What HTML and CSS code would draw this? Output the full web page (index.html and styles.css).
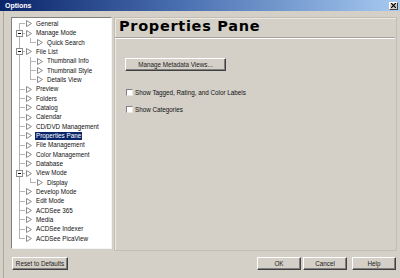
FILE: index.html
```html
<!DOCTYPE html>
<html lang="en">
<head>
    <meta charset="UTF-8">
    <title>Options</title>
    <link rel="stylesheet" href="styles.css">
</head>
<body>
    <svg class="defs" width="0" height="0">
        <symbol id="tri" viewBox="0 0 6 7">
            <path d="M0.5 0.5 L5.5 3.5 L0.5 6.5 Z" fill="#fff" stroke="#8a8a8a"/>
        </symbol>
    </svg>

    <div class="titlebar">
        <span class="title">Options</span>
        <span class="close">
            <svg width="5" height="5" viewBox="0 0 5 5"><path d="M0 0 L5 5 M5 0 L0 5" stroke="#000" stroke-width="1.2"/></svg>
        </span>
    </div>

    <div class="dialog">
        <div class="content">
            <!-- Category tree -->
            <div class="tree">
                <div class="row"><span class="cell tee first"></span><svg class="tri"><use href="#tri"/></svg><span class="label">General</span></div>
                <div class="row"><span class="cell tee"><span class="expander"></span></span><svg class="tri"><use href="#tri"/></svg><span class="label">Manage Mode</span></div>
                <div class="row"><span class="cell pipe"></span><span class="cell tee last"></span><svg class="tri"><use href="#tri"/></svg><span class="label">Quick Search</span></div>
                <div class="row"><span class="cell tee"><span class="expander"></span></span><svg class="tri"><use href="#tri"/></svg><span class="label">File List</span></div>
                <div class="row"><span class="cell pipe"></span><span class="cell tee"></span><svg class="tri"><use href="#tri"/></svg><span class="label">Thumbnail Info</span></div>
                <div class="row"><span class="cell pipe"></span><span class="cell tee"></span><svg class="tri"><use href="#tri"/></svg><span class="label">Thumbnail Style</span></div>
                <div class="row"><span class="cell pipe"></span><span class="cell tee last"></span><svg class="tri"><use href="#tri"/></svg><span class="label">Details View</span></div>
                <div class="row"><span class="cell tee"></span><svg class="tri"><use href="#tri"/></svg><span class="label">Preview</span></div>
                <div class="row"><span class="cell tee"></span><svg class="tri"><use href="#tri"/></svg><span class="label">Folders</span></div>
                <div class="row"><span class="cell tee"></span><svg class="tri"><use href="#tri"/></svg><span class="label">Catalog</span></div>
                <div class="row"><span class="cell tee"></span><svg class="tri"><use href="#tri"/></svg><span class="label">Calendar</span></div>
                <div class="row"><span class="cell tee"></span><svg class="tri"><use href="#tri"/></svg><span class="label">CD/DVD Management</span></div>
                <div class="row"><span class="cell tee"></span><svg class="tri"><use href="#tri"/></svg><span class="label selected">Properties Pane</span></div>
                <div class="row"><span class="cell tee"></span><svg class="tri"><use href="#tri"/></svg><span class="label">File Management</span></div>
                <div class="row"><span class="cell tee"></span><svg class="tri"><use href="#tri"/></svg><span class="label">Color Management</span></div>
                <div class="row"><span class="cell tee"></span><svg class="tri"><use href="#tri"/></svg><span class="label">Database</span></div>
                <div class="row"><span class="cell tee"><span class="expander"></span></span><svg class="tri"><use href="#tri"/></svg><span class="label">View Mode</span></div>
                <div class="row"><span class="cell pipe"></span><span class="cell tee last"></span><svg class="tri"><use href="#tri"/></svg><span class="label">Display</span></div>
                <div class="row"><span class="cell tee"></span><svg class="tri"><use href="#tri"/></svg><span class="label">Develop Mode</span></div>
                <div class="row"><span class="cell tee"></span><svg class="tri"><use href="#tri"/></svg><span class="label">Edit Mode</span></div>
                <div class="row"><span class="cell tee"></span><svg class="tri"><use href="#tri"/></svg><span class="label">ACDSee 365</span></div>
                <div class="row"><span class="cell tee"></span><svg class="tri"><use href="#tri"/></svg><span class="label">Media</span></div>
                <div class="row"><span class="cell tee"></span><svg class="tri"><use href="#tri"/></svg><span class="label">ACDSee Indexer</span></div>
                <div class="row"><span class="cell tee last"></span><svg class="tri"><use href="#tri"/></svg><span class="label">ACDSee PicaView</span></div>
            </div>

            <!-- Settings page -->
            <div class="page">
                <h1>Properties Pane</h1>
                <div class="rule"></div>
                <button class="btn btn-wide">Manage Metadata Views...</button>
                <label class="check"><span class="box"></span>Show Tagged, Rating, and Color Labels</label>
                <label class="check"><span class="box"></span>Show Categories</label>
            </div>
        </div>

        <div class="footer">
            <button class="btn btn-reset">Reset to Defaults</button>
            <div class="actions">
                <button class="btn btn-ok">OK</button>
                <button class="btn btn-cancel">Cancel</button>
                <button class="btn btn-help">Help</button>
            </div>
        </div>
    </div>
</body>
</html>
```

FILE: styles.css
```css
/* Classic Windows dialog look */
body {
    margin: 0;
    background-color: #d4d0c8;
    font-family: "Liberation Sans", Arial, sans-serif;
    font-size: 6.3px;
    color: #111;
    overflow: hidden;
}

.defs {
    position: absolute;
}

.titlebar {
    display: flex;
    justify-content: space-between;
    align-items: center;
    height: 11px;
    padding: 0 2px 0 5px;
    background: linear-gradient(to right, #0a246a, #4a6fb0 45%, #a6caf0);
}

.title {
    color: #fff;
    font-weight: bold;
    font-size: 7px;
}

.close {
    display: flex;
    align-items: center;
    justify-content: center;
    box-sizing: border-box;
    width: 9px;
    height: 8px;
    background-color: #d4d0c8;
    border: 1px solid;
    border-color: #fff #404040 #404040 #fff;
}

.dialog {
    margin-left: 3px;
    border-left: 1px solid #aca899;
    height: 267px;
}

.content {
    display: flex;
    gap: 2px;
    padding: 6px 3px 0 7px;
}

/* Tree */
.tree {
    box-sizing: border-box;
    width: 101px;
    height: 232px;
    padding: 1.3px 0 0 2px;
    background-color: #fff;
    border: 1px solid;
    border-color: #808080 #f4f4f4 #f4f4f4 #808080;
}

.row {
    display: flex;
    align-items: center;
    height: 9.33px;
}

.cell {
    display: flex;
    align-items: center;
    flex: none;
    width: 11px;
    height: 100%;
}

.pipe {
    background: linear-gradient(#b4b4b4, #b4b4b4) 5px 0 / 1px 100% no-repeat;
}

.tee {
    background:
        linear-gradient(#b4b4b4, #b4b4b4) 5px 0 / 1px 100% no-repeat,
        linear-gradient(#b4b4b4, #b4b4b4) 5px 4px / 6px 1px no-repeat;
}

.tee.first {
    background:
        linear-gradient(#b4b4b4, #b4b4b4) 5px 4px / 1px 6px no-repeat,
        linear-gradient(#b4b4b4, #b4b4b4) 5px 4px / 6px 1px no-repeat;
}

.tee.last {
    background:
        linear-gradient(#b4b4b4, #b4b4b4) 5px 0 / 1px 5px no-repeat,
        linear-gradient(#b4b4b4, #b4b4b4) 5px 4px / 6px 1px no-repeat;
}

.expander {
    box-sizing: border-box;
    width: 7px;
    height: 7px;
    margin-left: 2px;
    border: 1px solid #8a8a8a;
    background: linear-gradient(#000, #000) center / 3px 1px no-repeat, #fff;
}

.tri {
    flex: none;
    width: 6px;
    height: 7px;
    margin-left: 1px;
}

.label {
    margin-left: 3px;
    padding: 0 1px;
    line-height: 8px;
    white-space: nowrap;
}

.selected {
    background-color: #0a246a;
    color: #fff;
}

/* Right page */
.page {
    flex: 1;
    box-sizing: border-box;
    height: 234px;
    padding: 0 1px 0 4px;
    border: 1px solid #c2beb6;
    box-shadow: inset 1px 1px #ece9e2;
}

.page h1 {
    margin: 0;
    font-family: "DejaVu Sans", Verdana, sans-serif;
    font-size: 14.5px;
    letter-spacing: 0.7px;
    line-height: 16px;
    font-weight: bold;
    color: #000;
}

.rule {
    margin: 3px 0 0 -4px;
    height: 1px;
    background-color: #a8a49c;
    border-bottom: 1px solid #fff;
}

.btn {
    box-sizing: border-box;
    height: 13px;
    padding: 0;
    background-color: #d4d0c8;
    border: 1px solid;
    border-color: #fff #404040 #404040 #fff;
    box-shadow: inset -1px -1px #808080;
    font-family: inherit;
    font-size: 6.3px;
    color: #222;
}

.btn-wide {
    display: block;
    width: 101px;
    margin: 19px 0 0 6px;
}

.check {
    display: flex;
    align-items: center;
    height: 7px;
    margin: 18px 0 0 7px;
}

.check + .check {
    margin-top: 10px;
}

.box {
    box-sizing: border-box;
    width: 7px;
    height: 7px;
    margin-right: 2px;
    background-color: #fff;
    border: 1px solid;
    border-color: #808080 #e8e8e8 #e8e8e8 #808080;
}

/* Bottom buttons */
.footer {
    display: flex;
    justify-content: space-between;
    padding: 6px 4px 0 8px;
}

.btn-reset {
    width: 56px;
}

.actions {
    display: flex;
}

.btn-ok,
.btn-cancel,
.btn-help {
    width: 44px;
}

.btn-cancel {
    margin: 0 5px 0 2px;
}
```
